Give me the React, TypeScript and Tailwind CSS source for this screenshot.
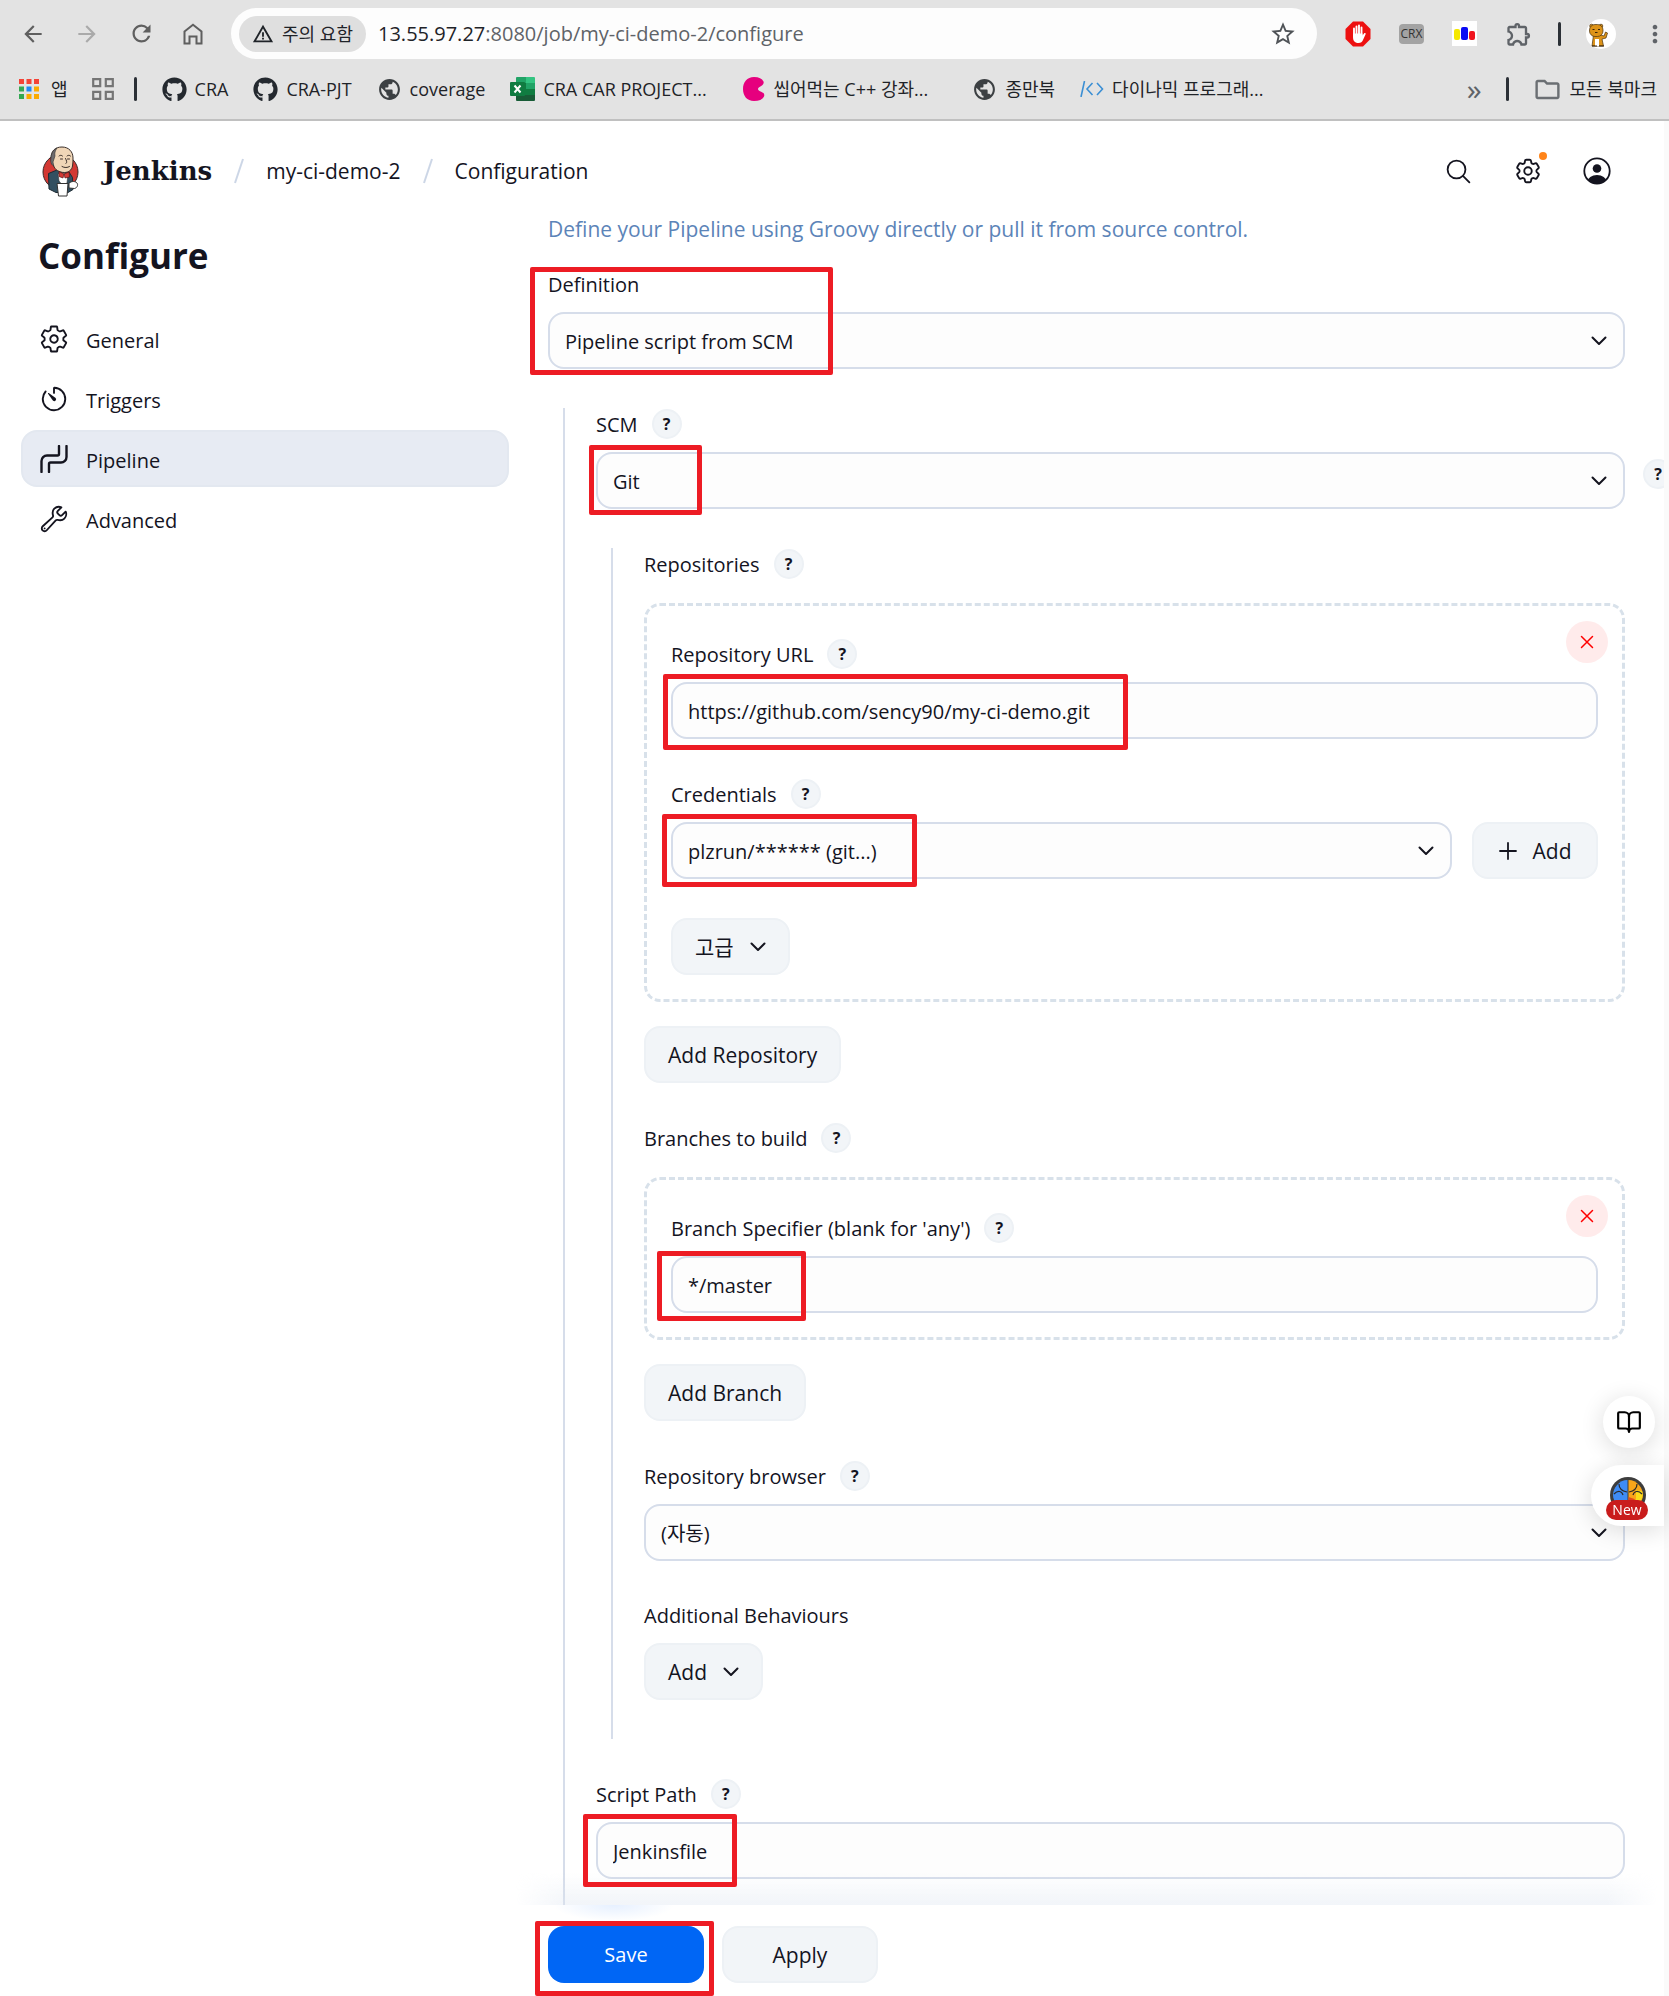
import { useState } from 'react'
import type { ReactNode } from 'react'
import { BookOpen } from 'lucide-react'
import { FaGithub } from 'react-icons/fa'
import { HiOutlineCog6Tooth } from 'react-icons/hi2'
import { IoBuildOutline, IoSearchOutline, IoSettingsOutline, IoTimerOutline } from 'react-icons/io5'
import {
  MdArrowBack,
  MdArrowForward,
  MdMoreVert,
  MdOutlineExtension,
  MdOutlineFolder,
  MdPublic,
  MdRefresh,
  MdStarBorder,
  MdWarningAmber,
} from 'react-icons/md'

/* ---------- icons ---------- */

const ChevronDown = ({ className = '' }: { className?: string }) => (
  <svg viewBox="0 0 16 10" fill="none" stroke="#14141f" strokeWidth="2" strokeLinecap="round" strokeLinejoin="round" className={'w-4 h-[10px] ' + className}>
    <path d="M1.5 1.5 8 8l6.5-6.5" />
  </svg>
)

const PlusIcon = () => (
  <svg viewBox="0 0 18 18" stroke="#14141f" strokeWidth="1.8" strokeLinecap="round" className="w-[18px] h-[18px]">
    <path d="M9 1v16M1 9h16" />
  </svg>
)

const CloseIcon = () => (
  <svg viewBox="0 0 14 14" stroke="#ff0000" strokeWidth="1.5" strokeLinecap="round" className="w-[14px] h-[14px]">
    <path d="M1.5 1.5l11 11M12.5 1.5l-11 11" />
  </svg>
)

const PipelineIcon = () => (
  <svg viewBox="0 0 28 28" fill="none" stroke="#14141f" strokeWidth="2.4" strokeLinecap="round" className="w-7 h-7">
    <path d="M1.5 27V16a5.500 5.500 0 0 1 5.500-5.500H17.500a1.500 1.500 0 0 0 1.500-1.500V1" />
    <path d="M9 27v-8a1.500 1.500 0 0 1 1.500-1.500H21a5.500 5.500 0 0 0 5.500-5.500V1" />
  </svg>
)

const HomeIcon = () => (
  <svg viewBox="0 0 20 22" fill="none" stroke="#5f5f5f" strokeWidth="2" className="w-5 h-[22px]">
    <path d="M1.5 8.5 10 1.8l8.5 6.7v12h-5v-7h-7v7h-5z" />
  </svg>
)

const UserIcon = () => (
  <svg viewBox="0 0 28 28" className="w-7 h-7">
    <clipPath id="user-ring"><circle cx="14" cy="14" r="13" /></clipPath>
    <circle cx="14" cy="14" r="12.7" fill="none" stroke="#14141f" strokeWidth="1.8" />
    <circle cx="14" cy="11.5" r="4.3" fill="#14141f" />
    <ellipse cx="14" cy="24.5" rx="9.5" ry="6.5" fill="#14141f" clipPath="url(#user-ring)" />
  </svg>
)

const JenkinsLogo = () => (
  <svg viewBox="0 0 37 51" className="w-[37px] h-[51px]">
    <circle cx="18.5" cy="26" r="17.5" fill="#d33833" stroke="#3a2a2a" strokeWidth="1" />
    <path d="M6.500 27.500 15 24l12 2 3.500 5.500.5 12-5 3H14L7 43z" fill="#335061" stroke="#1c2a33" strokeWidth="1" />
    <path d="M16 28l5-1 5 1-1 9-4 3-4-5z" fill="#fff" stroke="#333" strokeWidth=".6" />
    <path d="M9 12C9 5 13 1 20 1s11 5 11 11c0 3 0 5-.5 8-.6 4-4 6.500-8 6.500-5 0-9.500-2.500-11-7C9.500 18 9 15 9 12z" fill="#f0d6b7" stroke="#3a2f2a" strokeWidth="1" />
    <path d="M9 12C9.200 7 11.500 3.500 15 2c-2 3-2.500 5-2 8l-2 6 .8 4C8.500 18.500 8.500 15 9 12z" fill="#6d6b6d" stroke="#333" strokeWidth=".6" />
    <path d="M17 10c1-1 2.500-1 3.500 0M25 10c1-1 2.500-1 3.500 0M18.500 13h2M25.500 13h2M23.500 12.500c1 2 2 4 .5 5M20 20.500c2.500 1.500 5.500 1.300 7.500 0" fill="none" stroke="#3a2f2a" strokeWidth="1" strokeLinecap="round" />
    <path d="M17 25.500l5 2.500-1 4-4-1.500zM22 28l5-2 .5 5-4.500 1z" fill="#d33833" stroke="#5c1414" strokeWidth=".7" />
    <path d="M15 37.500h11l-1 12.500h-8.500z" fill="#fff" stroke="#333" strokeWidth="1" />
    <path d="M27 37c3-2 6-2 8 0 1.500 2 0 5-2.500 5.500L27 42z" fill="#fff" stroke="#333" strokeWidth="1" />
  </svg>
)

const AppsIcon = () => (
  <svg viewBox="0 0 20 20" className="w-5 h-5">
    <path d="M0 0h5v5H0zM7.500 0h5v5h-5zM15 0h5v5h-5z" fill="#f44336" />
    <path d="M0 7.500h5v5H0zM0 15h5v5H0z" fill="#34a853" />
    <path d="M7.500 7.500h5v5h-5z" fill="#1e88f5" />
    <path d="M15 7.500h5v5h-5zM7.500 15h5v5h-5zM15 15h5v5h-5z" fill="#fbab00" />
  </svg>
)

const GridIcon = () => (
  <svg viewBox="0 0 22 22" fill="none" stroke="#757575" strokeWidth="2.2" className="w-[22px] h-[22px]">
    <path d="M1.200 1.200h7v7h-7zM13.800 1.200h7v7h-7zM1.200 13.800h7v7h-7zM13.800 13.800h7v7h-7z" />
  </svg>
)

const ExcelIcon = () => (
  <svg viewBox="0 0 25 24" className="w-[25px] h-6">
    <path d="M6 1a1 1 0 0 1 1-1h9v6H6z" fill="#21a366" />
    <path d="M16 0h8a1 1 0 0 1 1 1v5h-9z" fill="#33c481" />
    <path d="M6 6h10v12H6z" fill="#107c41" />
    <path d="M16 6h9v6h-9z" fill="#21a366" />
    <path d="M16 12h9v6h-9z" fill="#107c41" />
    <path d="M6 18h19v5a1 1 0 0 1-1 1H7a1 1 0 0 1-1-1z" fill="#185c37" />
    <rect y="5" width="15" height="14" rx="1" fill="#107c41" />
    <path d="M4.500 8.500l6 7M10.500 8.500l-6 7" stroke="#fff" strokeWidth="2" />
  </svg>
)

const PacIcon = () => (
  <svg viewBox="0 0 22 24" className="w-[22px] h-6">
    <path d="M11 0c5 0 8 1.500 9.500 4.500.8 2-1 4-4 5.500-2 1-2 3 0 4 4 1.500 5.500 3 4.500 5.500C19.500 22.500 16 24 11 24 4 24 0 19 0 12S4 0 11 0z" fill="#e6007e" />
  </svg>
)

const CodeIcon = () => (
  <svg viewBox="0 0 24 16" fill="none" stroke="#3b8fd4" strokeWidth="1.6" className="w-6 h-4">
    <path d="M4.500 0 1 16M12.500 2 7 8l5.500 6M17 2l5.500 6L17 14" />
  </svg>
)

const BlockerIcon = () => (
  <svg viewBox="0 0 26 26" className="w-[26px] h-[26px]">
    <path d="M8 .5h10L25.500 8v10L18 25.500H8L.5 18V8z" fill="#ed1010" />
    <path d="M9 15V7.500M11.500 13V5.500M14 13V4.500M16.500 14V6.500" stroke="#fff" strokeWidth="1.900" strokeLinecap="round" />
    <path d="M8 12.500h9.500v2l1.500-2c.8-1 2-.4 1.600.8L18 19c-.8 1.700-2 3-4.500 3C9.500 22 8 19.500 8 16z" fill="#fff" />
  </svg>
)

const BarsIcon = () => (
  <svg viewBox="0 0 25 25" className="w-[25px] h-[25px]">
    <path d="M0 0h25v25H0z" fill="#fff" />
    <rect x="2" y="8" width="6" height="11" rx="2" fill="#f5e800" />
    <rect x="9" y="6" width="7" height="13" rx="2" fill="#0a0af5" />
    <rect x="17" y="10" width="6" height="9" rx="2" fill="#f0141e" />
  </svg>
)

const AvatarIcon = () => (
  <svg viewBox="0 0 30 30" className="w-[30px] h-[30px]">
    <circle cx="15" cy="15" r="15" fill="#fff" />
    <g fill="#dd9318" stroke="#4a3210" strokeWidth=".7">
      <path d="M7.500 16h7l3.500 1 1.500-4 2 1-1.500 5-4 1 1.500 7H6z" />
      <circle cx="5.500" cy="7" r="1.800" />
      <circle cx="15" cy="7" r="1.800" />
      <rect x="3.500" y="5.500" width="13.500" height="12" rx="5.500" />
    </g>
    <path d="M9 20h4v7H9z" fill="#fff" />
    <path d="M6.500 10.500h2M12 10.500h2M9 13.500h2.500M6 27h5M13 27h5" stroke="#3a2508" strokeWidth="1.200" />
  </svg>
)

const BrainIcon = () => (
  <svg viewBox="0 0 36 36" className="w-9 h-9">
    <circle cx="18" cy="18" r="18" fill="#3d3d3d" />
    <path d="M17.500 3v28C9 31 3 25 3 18S9 3 17.500 3z" fill="#3f8cf5" />
    <path d="M18.500 3v28C27 31 33 25 33 18S27 3 18.500 3z" fill="#f9a51a" />
    <path d="M26 13l6 1c2 6-1 11-6 14z" fill="#f9dc1a" />
    <path d="M18.500 20l6 2 2 7h-8z" fill="#e04a1a" />
    <path d="M9 7c0 5 3 7 8 8M4 17c4-4 8-3 9 1M27 7c0 5-3 7-8 8M32 17c-4-4-8-3-9 1" fill="none" stroke="#2b2b2b" strokeWidth="1.200" />
  </svg>
)

/* ---------- browser toolbar ---------- */

const Divider = () => <span className="w-[3px] h-6 rounded-full bg-[#2b3036]" />

const bookmarks: { label: string; icon: ReactNode; width?: string }[] = [
  { label: 'CRA', icon: <FaGithub size={25} color="#24292f" /> },
  { label: 'CRA-PJT', icon: <FaGithub size={25} color="#24292f" /> },
  { label: 'coverage', icon: <MdPublic size={25} color="#3c4043" /> },
  { label: 'CRA CAR PROJECT...', icon: <ExcelIcon />, width: 'w-[208px]' },
  { label: '씹어먹는 C++ 강좌...', icon: <PacIcon />, width: 'w-[204px]' },
  { label: '종만북', icon: <MdPublic size={25} color="#3c4043" /> },
  { label: '다이나믹 프로그래...', icon: <CodeIcon /> },
]

const BrowserBar = () => (
  <div className="flex flex-col h-[121px] bg-[#e3e3e3] border-b-2 border-[#c0c0c0] text-[#1f2328]">
    <div className="flex items-center h-[51px] mt-2 pl-5">
      <div className="flex items-center gap-7 shrink-0">
        <button aria-label="Back"><MdArrowBack size={26} color="#5f5f5f" /></button>
        <button aria-label="Forward"><MdArrowForward size={26} color="#aaaaaa" /></button>
        <button aria-label="Reload"><MdRefresh size={27} color="#5f5f5f" /></button>
        <button aria-label="Home"><HomeIcon /></button>
      </div>
      <div className="flex items-center flex-1 h-full ml-7 pl-2 pr-5 rounded-full bg-[#fdfdfd]">
        <button className="flex items-center justify-center gap-2 w-[127px] h-9 rounded-full bg-[#dfdfdf] text-[18px] whitespace-nowrap">
          <MdWarningAmber size={22} />
          주의 요함
        </button>
        <p className="flex-1 pl-3 text-[20px]">
          13.55.97.27<span className="text-[#5f6368]">:8080/job/my-ci-demo-2/configure</span>
        </p>
        <button aria-label="Bookmark this page"><MdStarBorder size={28} color="#4f5357" /></button>
      </div>
      <div className="flex items-center gap-7 ml-7 shrink-0">
        <BlockerIcon />
        <span className="flex items-center justify-center w-[25px] h-5 rounded-sm bg-[#a3a3a3] text-xs text-[#333333]">CRX</span>
        <BarsIcon />
        <div className="flex items-center gap-[25px]">
          <MdOutlineExtension size={28} color="#5f6368" />
          <Divider />
          <AvatarIcon />
          <button aria-label="Menu"><MdMoreVert size={28} color="#5f6368" /></button>
        </div>
      </div>
    </div>
    <div className="flex items-center gap-[25px] h-[60px] pl-[19px] pr-3 text-[18px] whitespace-nowrap">
      <div className="flex items-center gap-5">
        <a href="#apps" className="flex items-center gap-3 mr-1"><AppsIcon />앱</a>
        <GridIcon />
        <Divider />
      </div>
      {bookmarks.map((b) => (
        <a key={b.label} href="#bookmark" className={'flex items-center gap-2 ' + (b.width ?? '')}>
          {b.icon}
          {b.label}
        </a>
      ))}
      <div className="flex items-center gap-6 ml-auto">
        <span className="text-3xl leading-6 text-[#5f6368]">»</span>
        <Divider />
        <a href="#all" className="flex items-center gap-2">
          <MdOutlineFolder size={29} color="#6b6f73" />
          모든 북마크
        </a>
      </div>
    </div>
  </div>
)

/* ---------- form pieces ---------- */

const HelpButton = ({ topic }: { topic: string }) => (
  <button
    type="button"
    aria-label={'Help for ' + topic}
    className="flex items-center justify-center size-[30px] rounded-full border-2 border-[#edf1f5] bg-[#f2f5f8] text-base font-bold"
  >
    ?
  </button>
)

const Label = ({ htmlFor, help = true, children }: { htmlFor?: string; help?: boolean; children: string }) => (
  <div className="flex items-center gap-[14px] h-[31px] mb-[13px]">
    <label htmlFor={htmlFor} className="pt-[2px]">{children}</label>
    {help && <HelpButton topic={children} />}
  </div>
)

const Highlight = ({ className }: { className: string }) => (
  <span className={'absolute z-10 rounded-xs border-5 border-[#ed1c24] pointer-events-none ' + className} />
)

const controlStyle = 'w-full h-[57px] px-[15px] pt-[2px] rounded-2xl border-2 border-[#d6ddea] bg-[#fdfdfd] outline-none'

const TextInput = ({ id, initial, mark }: { id: string; initial: string; mark: string }) => {
  const [value, setValue] = useState(initial)
  return (
    <div className="relative">
      <input id={id} value={value} onChange={(e) => setValue(e.target.value)} className={controlStyle} />
      <Highlight className={mark} />
    </div>
  )
}

const Select = ({ id, option, mark }: { id: string; option: string; mark?: string }) => (
  <div className="relative flex-1">
    <select id={id} className={controlStyle + ' appearance-none'}>
      <option>{option}</option>
    </select>
    <ChevronDown className="absolute right-[18px] top-6 pointer-events-none" />
    {mark && <Highlight className={mark} />}
  </div>
)

const Button = ({ className = '', children }: { className?: string; children: ReactNode }) => (
  <button
    type="button"
    className={'flex items-center justify-center gap-4 h-[57px] px-[22px] rounded-2xl border-2 border-[#edf1f5] bg-[#f2f5f8] text-[21px] whitespace-nowrap ' + className}
  >
    {children}
  </button>
)

const Chunk = ({ children }: { children: ReactNode }) => (
  <div className="relative mb-6 px-6 pt-8 pb-6 rounded-2xl border-3 border-dashed border-[#d8e1ea]">
    <button type="button" aria-label="Delete" className="absolute right-[14px] top-[15px] flex items-center justify-center size-[42px] rounded-full bg-[#ffebeb]">
      <CloseIcon />
    </button>
    {children}
  </div>
)

const ChunkTitle = ({ children }: { children: string }) => (
  <div className="flex items-center gap-[14px] h-[31px] mb-6">
    <span className="pt-[2px]">{children}</span>
    <HelpButton topic={children} />
  </div>
)

/* ---------- page ---------- */

const navItems = [
  { name: 'General', icon: <IoSettingsOutline size={30} /> },
  { name: 'Triggers', icon: <IoTimerOutline size={30} /> },
  { name: 'Pipeline', icon: <PipelineIcon /> },
  { name: 'Advanced', icon: <IoBuildOutline size={30} /> },
]

const Slash = () => (
  <svg viewBox="0 0 10 26" className="w-[10px] h-[26px] mx-[22px]">
    <path d="M9 1 1 25" stroke="#ccd6e6" strokeWidth="2" />
  </svg>
)

const PageHeader = () => (
  <header className="flex items-center h-[100px] pl-[42px] pr-[53px] text-[21px]">
    <a href="#home" className="flex items-center gap-6">
      <JenkinsLogo />
      <span className="font-['DejaVu_Serif',serif] text-[26px] font-bold">Jenkins</span>
    </a>
    <Slash />
    <a href="#job">my-ci-demo-2</a>
    <Slash />
    <a href="#configure">Configuration</a>
    <div className="flex items-center gap-10 ml-auto">
      <button aria-label="Search"><IoSearchOutline size={29} /></button>
      <button aria-label="Manage Jenkins" className="relative">
        <HiOutlineCog6Tooth size={30} />
        <span className="absolute -top-1 -right-1 size-2 rounded-full bg-[#ff8419]" />
      </button>
      <button aria-label="Account"><UserIcon /></button>
    </div>
  </header>
)

const Sidebar = () => (
  <aside className="w-[488px] shrink-0">
    <h1 className="h-[70px] mb-[19px] pl-[17px] text-[35px] leading-[70px] font-bold">Configure</h1>
    <nav className="flex flex-col gap-[3px]">
      {navItems.map((item) => (
        <a
          key={item.name}
          href="#section"
          className={
            'flex items-center gap-[17px] h-[57px] pl-4 rounded-2xl border-2 ' +
            (item.name === 'Pipeline' ? 'border-[#e3e8f0] bg-[#e7ebf3]' : 'border-transparent')
          }
        >
          <span className="flex justify-center w-[30px]">{item.icon}</span>
          <span className="pt-1">{item.name}</span>
        </a>
      ))}
    </nav>
  </aside>
)

const GitSettings = () => (
  <div className="mt-[39px] ml-[15px] pl-[31px] pb-[39px] border-l-2 border-[#d6ddea]">
    <ChunkTitle>Repositories</ChunkTitle>
    <Chunk>
      <Label htmlFor="repo-url">Repository URL</Label>
      <TextInput id="repo-url" initial="https://github.com/sency90/my-ci-demo.git" mark="-left-2 -top-2 w-[465px] h-[76px]" />
      <div className="mt-[39px]">
        <Label htmlFor="credentials">Credentials</Label>
        <div className="flex gap-5">
          <Select id="credentials" option="plzrun/****** (git...)" mark="-left-[9px] -top-2 w-[255px] h-[73px]" />
          <Button className="w-[126px]"><PlusIcon />Add</Button>
        </div>
      </div>
      <Button className="mt-[39px]">고급<ChevronDown /></Button>
    </Chunk>
    <Button className="mb-[39px]">Add Repository</Button>

    <ChunkTitle>Branches to build</ChunkTitle>
    <Chunk>
      <Label htmlFor="branch">Branch Specifier (blank for 'any')</Label>
      <TextInput id="branch" initial="*/master" mark="-left-[14px] -top-[5px] w-[149px] h-[70px]" />
    </Chunk>
    <Button className="mb-[39px]">Add Branch</Button>

    <Label htmlFor="browser">Repository browser</Label>
    <Select id="browser" option="(자동)" />

    <div className="mt-[38px]">
      <Label help={false}>Additional Behaviours</Label>
      <Button>Add<ChevronDown /></Button>
    </div>
  </div>
)

const PipelineForm = () => (
  <form className="pr-[39px]" onSubmit={(e) => e.preventDefault()}>
    <p className="mb-[31px] text-[21px] leading-4 text-[#5c84b8]">
      Define your Pipeline using Groovy directly or pull it from source control.
    </p>
    <Label htmlFor="definition" help={false}>Definition</Label>
    <Select id="definition" option="Pipeline script from SCM" mark="-left-[18px] -top-[45px] w-[303px] h-[108px]" />

    <div className="mt-[39px] ml-[15px] pl-[31px] pb-[26px] border-l-2 border-[#d6ddea]">
      <Label htmlFor="scm">SCM</Label>
      <div className="relative">
        <Select id="scm" option="Git" mark="-left-[7px] -top-[7px] w-[113px] h-[70px]" />
        <div className="absolute -right-12 top-[7px]"><HelpButton topic="Pipeline definition" /></div>
      </div>
      <GitSettings />
      <div className="mt-[39px]">
        <Label htmlFor="script-path">Script Path</Label>
        <TextInput id="script-path" initial="Jenkinsfile" mark="-left-[13px] -top-2 w-[154px] h-[73px]" />
      </div>
    </div>

    <div className="relative flex gap-[18px] pt-[21px] pb-[14px] bg-white bg-[radial-gradient(ellipse_60px_16px_at_66px_0px,#e6f0ff,transparent)]">
      <div className="absolute -left-8 -right-8 -top-8 h-8 bg-linear-to-t from-[#dde5f0]/40 to-transparent pointer-events-none [mask-image:linear-gradient(to_right,transparent,black_50px,black_calc(100%-50px),transparent)]" />
      <div className="relative">
        <button type="submit" className="w-[156px] h-[57px] rounded-2xl bg-[#0066f5] text-white">Save</button>
        <Highlight className="-left-[13px] -top-[5px] w-[179px] h-[75px]" />
      </div>
      <Button className="w-[156px]">Apply</Button>
    </div>
  </form>
)

const FloatingTools = () => (
  <div className="fixed right-[5px] bottom-[470px] z-20 flex flex-col items-end gap-[17px]">
    <button aria-label="Reader" className="flex items-center justify-center size-[52px] mr-[9px] rounded-full bg-white shadow-[0_4px_24px_rgba(0,0,0,0.14)]">
      <BookOpen size={26} color="#000000" />
    </button>
    <button aria-label="Assistant" className="relative flex justify-center w-[73px] h-[61px] pt-3 rounded-l-full bg-white shadow-[0_4px_24px_rgba(0,0,0,0.14)]">
      <BrainIcon />
      <span className="absolute left-[15px] bottom-[6px] w-[42px] h-5 rounded-full bg-[#c91c1c] text-sm leading-5 text-white">New</span>
    </button>
  </div>
)

const App = () => (
  <div className="bg-white font-['Open_Sans','Noto_Sans_CJK_KR',sans-serif] text-[20px] leading-7 text-[#14141f]">
    <BrowserBar />
    <div className="flex">
      <div className="flex-1 min-w-0 overflow-hidden">
        <PageHeader />
        <div className="flex pl-[21px] gap-[39px]">
          <Sidebar />
          <main className="flex-1 min-w-0">
            <PipelineForm />
          </main>
        </div>
      </div>
      <div className="w-[5px] bg-[#fafafa]" />
    </div>
    <FloatingTools />
  </div>
)

export default App
